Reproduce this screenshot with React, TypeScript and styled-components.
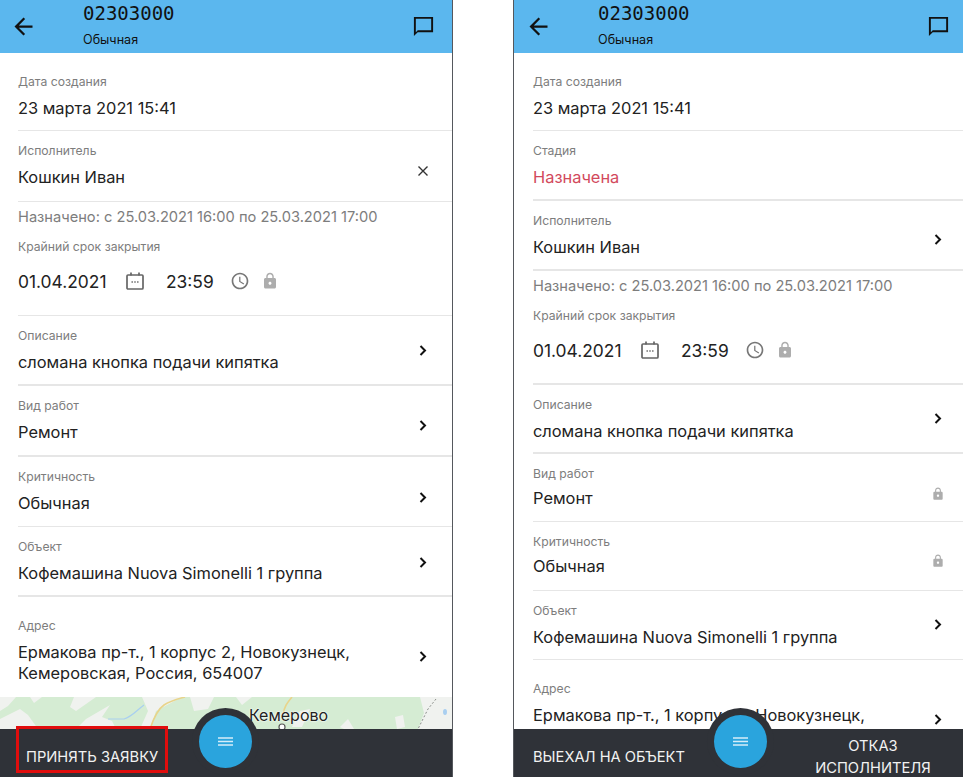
import styled, { createGlobalStyle } from 'styled-components';

const GlobalStyle = createGlobalStyle`
  html, body { margin: 0; padding: 0; background: #fff; }
  body { font-family: "Inter", "Open Sans", sans-serif; }
`;

const Page = styled.div`
  display: flex;
  justify-content: space-between;
  width: 963px;
  height: 777px;
  overflow: hidden;
`;

const Phone = styled.div<{ $side: 'left' | 'right' }>`
  --inset: ${(p) => (p.$side === 'left' ? '18px' : '19px')};
  --right: ${(p) => (p.$side === 'left' ? '22px' : '18px')};
  --head-right: ${(p) => (p.$side === 'left' ? '17px' : '13px')};
  position: relative;
  display: flex;
  flex-direction: column;
  box-sizing: border-box;
  width: ${(p) => (p.$side === 'left' ? '453px' : '450px')};
  height: 777px;
  ${(p) => (p.$side === 'left' ? 'border-right' : 'border-left')}: 1px solid #55585d;
  overflow: hidden;
`;

const Header = styled.div`
  display: flex;
  align-items: center;
  flex: none;
  height: 53px;
  padding: 0 var(--head-right) 0 calc(var(--inset) - 8px);
  background: #5bb7ee;
  color: #111;
`;

const HeaderText = styled.div`
  flex: 1;
  margin-left: 46px;
`;

const Code = styled.div`
  font-family: "DejaVu Sans Mono", monospace;
  font-size: 19px;
  line-height: 26px;
`;

const Sub = styled.div`
  font-size: 12.6px;
  line-height: 27px;
`;

const Content = styled.div`
  flex: 1;
  min-height: 0;
  overflow: hidden;
  padding-top: 9px;
`;

const Row = styled.div<{ $h: number; $line: number }>`
  display: flex;
  align-items: flex-start;
  box-sizing: border-box;
  height: ${(p) => p.$h}px;
  margin-left: var(--inset);
  padding: 10px var(--right) 0 0;
  border-bottom: ${(p) => p.$line}px solid #e6e6e6;
`;

const RowBody = styled.div`
  flex: 1;
  min-width: 0;
`;

const Label = styled.div`
  font-size: 12.2px;
  line-height: 20px;
  color: #7d7d7d;
`;

const Value = styled.div<{ $red?: boolean; $tight?: boolean }>`
  margin-top: ${(p) => (p.$tight ? '4px' : '6px')};
  font-size: 16.4px;
  line-height: 21px;
  color: ${(p) => (p.$red ? '#d2495c' : '#222')};
`;

const Trail = styled.div<{ $top: number }>`
  display: flex;
  align-items: center;
  justify-content: center;
  flex: none;
  width: 14px;
  height: 16px;
  margin-top: ${(p) => p.$top - 18}px;
`;

const Deadline = styled.div<{ $h: number; $line: number }>`
  box-sizing: border-box;
  height: ${(p) => p.$h}px;
  margin-left: var(--inset);
  border-bottom: ${(p) => p.$line}px solid #e6e6e6;
`;

const Note = styled.div`
  font-size: 14.65px;
  line-height: 30px;
  color: #7d7d7d;
`;

const DeadlineLabel = styled(Label)`
  margin-top: 5px;
`;

const DateRow = styled.div`
  display: flex;
  align-items: center;
  height: 30px;
  margin-top: 9px;
  font-size: 17.4px;
  color: #222;
`;

const DateText = styled.span`
  width: 108px;
`;

const TimeText = styled.span`
  width: 64px;
  margin-left: 22px;
`;

const LockGap = styled.span`
  display: flex;
  margin-left: 11px;
`;

const MapStrip = styled.div`
  position: relative;
  height: 32px;
  overflow: hidden;
`;

const CityLabel = styled.span`
  position: absolute;
  left: 249px;
  top: 8px;
  font-size: 16px;
  line-height: 20px;
  color: #222;
  text-shadow: 0 0 2px #fff, 0 0 2px #fff;
`;

const Bar = styled.div`
  display: flex;
  flex: none;
  height: 48px;
  background: #2f3238;
  color: #f2f2f2;
  font-size: 14.7px;
`;

const BarButton = styled.div<{ $marked?: boolean }>`
  position: relative;
  margin-left: var(--inset);
  padding: 19px 0 0 ${(p) => (p.$marked ? '8px' : '0')};
  line-height: 18px;

  ${(p) =>
    p.$marked &&
    `&::after {
      content: '';
      position: absolute;
      left: -2px;
      top: -3px;
      width: 152px;
      height: 47px;
      box-sizing: border-box;
      border: 3px solid #e00d0d;
    }`}
`;

const BarButtonWrap = styled.div`
  width: 130px;
  margin: 0 25px 0 auto;
  padding-top: 6px;
  line-height: 22px;
  text-align: center;
`;

const Fab = styled.div<{ $x: number }>`
  position: absolute;
  left: ${(p) => p.$x}px;
  bottom: 9px;
  display: flex;
  align-items: center;
  justify-content: center;
  width: 53px;
  height: 53px;
  border-radius: 50%;
  background: #2aa4dd;
  box-shadow: 0 0 0 7px #2f3238;
`;

const BackIcon = () => (
  <svg width="27" height="27" viewBox="0 0 24 24" fill="#111">
    <path d="M20 11H7.83l5.59-5.59L12 4l-8 8 8 8 1.41-1.41L7.83 13H20v-2z" />
  </svg>
);

const ChatIcon = () => (
  <svg width="23" height="23" viewBox="0 0 24 24" fill="#111">
    <path d="M22 2H2v20l4-4h16V2zm-2 14H6l-2 2V4h16v12z" />
  </svg>
);

const Chevron = () => (
  <svg width="8" height="11" viewBox="0 0 8 11" fill="none" stroke="#111" strokeWidth="2">
    <path d="M1.5 1l4.5 4.5L1.5 10" />
  </svg>
);

const CloseIcon = () => (
  <svg width="12" height="12" viewBox="0 0 12 12" fill="none" stroke="#333" strokeWidth="1.4">
    <path d="M1.5 1.5l9 9M10.5 1.5l-9 9" />
  </svg>
);

const LockIcon = () => (
  <svg width="18" height="18" viewBox="0 0 24 24" fill="#adadad">
    <path d="M18 8h-1V6c0-2.76-2.24-5-5-5S7 3.24 7 6v2H6c-1.1 0-2 .9-2 2v10c0 1.1.9 2 2 2h12c1.1 0 2-.9 2-2V10c0-1.1-.9-2-2-2zm-6 9c-1.1 0-2-.9-2-2s.9-2 2-2 2 .9 2 2-.9 2-2 2zm3.1-9H8.9V6c0-1.71 1.39-3.1 3.1-3.1 1.71 0 3.1 1.39 3.1 3.1v2z" />
  </svg>
);

const ClockIcon = () => (
  <svg width="20" height="20" viewBox="0 0 24 24" fill="#777">
    <path d="M11.99 2C6.47 2 2 6.48 2 12s4.47 10 9.99 10C17.52 22 22 17.52 22 12S17.52 2 11.99 2zM12 20c-4.42 0-8-3.58-8-8s3.58-8 8-8 8 3.58 8 8-3.58 8-8 8zM12.5 7H11v6l5.25 3.15.75-1.23-4.5-2.67z" />
  </svg>
);

const CalendarIcon = () => (
  <svg width="18" height="18" viewBox="0 0 18 18" fill="none" stroke="#666" strokeWidth="1.7">
    <rect x="1" y="3" width="16" height="14" rx="1" />
    <path d="M5 0.5v3M13 0.5v3" />
    <path d="M5.5 10h1.4M8.3 10h1.4M11.1 10h1.4" strokeWidth="1.5" />
  </svg>
);

const MenuIcon = () => (
  <svg width="15" height="9" viewBox="0 0 15 9" fill="none" stroke="#d6edf9" strokeWidth="1.3">
    <path d="M0 1h15M0 4.5h15M0 8h15" />
  </svg>
);

const MapArt = () => (
  <svg width="452" height="32" viewBox="0 0 452 32">
    <rect width="452" height="32" fill="#d5ecd3" />
    <g fill="#f0f2ef">
      <path d="M0 0h16L8 9 0 14zM0 22l20-10 8 6 10 14H0zM74 0h22l-20 14-6-4zM86 22l24-14-8 12 10 4 4 8H76zM30 0h12l-8 6zM142 0h20l20 0-26 14-6 18h-10l8-18zM190 0h24l-6 12-14 2zM236 0h16l-10 8zM300 14l10-2-8 18h-10zM395 20l8-2 2 12-8 2zM420 0h32v32h-34l6-16zM340 30l8-8 6 10h-10z" />
    </g>
    <path d="M150 32c4-12 8-20 14-24s14-6 21-8" fill="none" stroke="#e8d48a" strokeWidth="1.6" />
    <path d="M292 0c-5 6-8 10-9 18" fill="none" stroke="#e8d48a" strokeWidth="1.6" />
    <path d="M108 22h16c8-2 14-10 20-14" fill="none" stroke="#a9cff0" strokeWidth="1.2" />
    <path d="M436 2l-8 10-10 20" fill="none" stroke="#8a8f8a" strokeWidth="1" strokeDasharray="2 2" />
    <ellipse cx="445" cy="15" rx="2" ry="3" fill="#a9cff0" />
    <circle cx="282" cy="30" r="3" fill="#fff" stroke="#555" strokeWidth="1.2" />
  </svg>
);

type Field = {
  label: string;
  value: string;
  h: number;
  line: number;
  icon?: 'chevron' | 'close' | 'lock';
  iconAt?: number;
  red?: boolean;
  tight?: boolean;
  lines?: string[];
};

const Icons = { chevron: Chevron, close: CloseIcon, lock: LockIcon };

const FieldRow = ({ f }: { f: Field }) => {
  const Icon = f.icon ? Icons[f.icon] : null;
  return (
    <Row $h={f.h} $line={f.line}>
      <RowBody>
        <Label>{f.label}</Label>
        <Value $red={f.red} $tight={f.tight}>
          {f.lines ? f.lines.map((l) => <div key={l}>{l}</div>) : f.value}
        </Value>
      </RowBody>
      {Icon && (
        <Trail $top={f.iconAt ?? 0}>
          <Icon />
        </Trail>
      )}
    </Row>
  );
};

const DeadlineBlock = ({ h, line }: { h: number; line: number }) => (
  <Deadline $h={h} $line={line}>
    <Note>Назначено: с 25.03.2021 16:00 по 25.03.2021 17:00</Note>
    <DeadlineLabel>Крайний срок закрытия</DeadlineLabel>
    <DateRow>
      <DateText>01.04.2021</DateText>
      <CalendarIcon />
      <TimeText>23:59</TimeText>
      <ClockIcon />
      <LockGap>
        <LockIcon />
      </LockGap>
    </DateRow>
  </Deadline>
);

const created: Field = { label: 'Дата создания', value: '23 марта 2021 15:41', h: 69, line: 1 };
const address = ['Ермакова пр-т., 1 корпус 2, Новокузнецк,', 'Кемеровская, Россия, 654007'];

const leftTop: Field[] = [
  created,
  { label: 'Исполнитель', value: 'Кошкин Иван', h: 71, line: 1, icon: 'close', iconAt: 40 },
];

const leftBottom: Field[] = [
  { label: 'Описание', value: 'сломана кнопка подачи кипятка', h: 70, line: 2, icon: 'chevron', iconAt: 34 },
  { label: 'Вид работ', value: 'Ремонт', h: 71, line: 2, icon: 'chevron', iconAt: 39 },
  { label: 'Критичность', value: 'Обычная', h: 70, line: 1, icon: 'chevron', iconAt: 40 },
  { label: 'Объект', value: 'Кофемашина Nuova Simonelli 1 группа', h: 70, line: 2, icon: 'chevron', iconAt: 35 },
];

const rightTop: Field[] = [
  created,
  { label: 'Стадия', value: 'Назначена', h: 70, line: 2, red: true },
  { label: 'Исполнитель', value: 'Кошкин Иван', h: 70, line: 2, icon: 'chevron', iconAt: 38 },
];

const rightBottom: Field[] = [
  { label: 'Описание', value: 'сломана кнопка подачи кипятка', h: 69, line: 2, icon: 'chevron', iconAt: 33 },
  { label: 'Вид работ', value: 'Ремонт', h: 68, line: 1, icon: 'lock', iconAt: 40, tight: true },
  { label: 'Критичность', value: 'Обычная', h: 69, line: 1, icon: 'lock', iconAt: 39, tight: true },
  { label: 'Объект', value: 'Кофемашина Nuova Simonelli 1 группа', h: 69, line: 1, icon: 'chevron', iconAt: 33 },
];

const AddressRow = styled(Row)`
  padding-top: 19px;
`;

const Address = ({ iconAt, h }: { iconAt: number; h: number }) => (
  <AddressRow $h={h} $line={0}>
    <RowBody>
      <Label>Адрес</Label>
      <Value>
        {address.map((l) => (
          <div key={l}>{l}</div>
        ))}
      </Value>
    </RowBody>
    <Trail $top={iconAt - 9}>
      <Chevron />
    </Trail>
  </AddressRow>
);

function App() {
  return (
    <Page>
      <GlobalStyle />
      <Phone $side="left">
        <Header>
          <BackIcon />
          <HeaderText>
            <Code>02303000</Code>
            <Sub>Обычная</Sub>
          </HeaderText>
          <ChatIcon />
        </Header>
        <Content>
          {leftTop.map((f) => (
            <FieldRow key={f.label} f={f} />
          ))}
          <DeadlineBlock h={114} line={1} />
          {leftBottom.map((f) => (
            <FieldRow key={f.label} f={f} />
          ))}
          <Address iconAt={59} h={100} />
          <MapStrip>
            <MapArt />
            <CityLabel>Кемерово</CityLabel>
          </MapStrip>
        </Content>
        <Bar>
          <BarButton $marked>ПРИНЯТЬ ЗАЯВКУ</BarButton>
        </Bar>
        <Fab $x={199}>
          <MenuIcon />
        </Fab>
      </Phone>
      <Phone $side="right">
        <Header>
          <BackIcon />
          <HeaderText>
            <Code>02303000</Code>
            <Sub>Обычная</Sub>
          </HeaderText>
          <ChatIcon />
        </Header>
        <Content>
          {rightTop.map((f) => (
            <FieldRow key={f.label} f={f} />
          ))}
          <DeadlineBlock h={114} line={2} />
          {rightBottom.map((f) => (
            <FieldRow key={f.label} f={f} />
          ))}
          <Address iconAt={59} h={100} />
        </Content>
        <Bar>
          <BarButton>ВЫЕХАЛ НА ОБЪЕКТ</BarButton>
          <BarButtonWrap>ОТКАЗ ИСПОЛНИТЕЛЯ</BarButtonWrap>
        </Bar>
        <Fab $x={200}>
          <MenuIcon />
        </Fab>
      </Phone>
    </Page>
  );
}

export default App;
